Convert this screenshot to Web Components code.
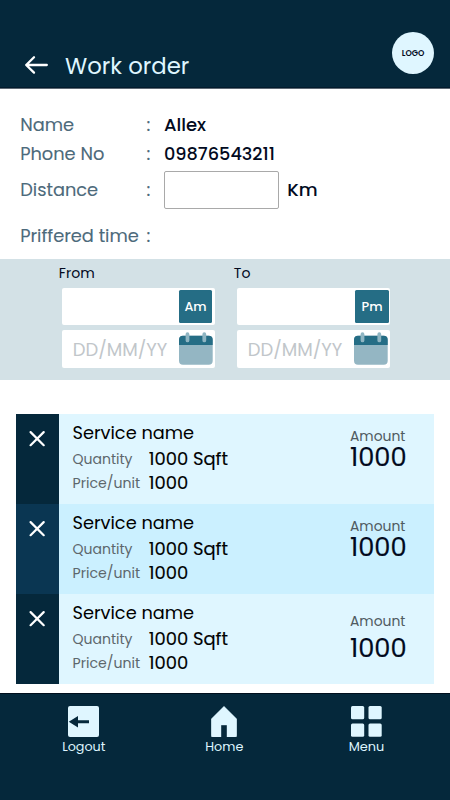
<!DOCTYPE html>
<html lang="en">
<head>
<meta charset="utf-8">
<title>Work order</title>
<style>
html,body{margin:0;background:#fff}
body{font-family:Poppins,Inter,"Liberation Sans",sans-serif;color:#020a1e}
</style>
</head>
<body>
<work-order-page></work-order-page>
<script>
const define = (name, html, setup) => {
  const t = document.createElement('template');
  t.innerHTML = html;
  customElements.define(name, class extends HTMLElement {
    connectedCallback() {
      if (this.shadowRoot) return;
      this.attachShadow({mode: 'open'}).append(document.importNode(t.content, true));
      if (setup) setup(this);
    }
  });
};

/* A single line of text in a 20px line box, with its size in px. */
define('text-line', `<style>
:host{display:block;white-space:nowrap;line-height:20px;height:20px;flex:none}
:host([tall]){line-height:26px;height:26px}
</style><slot></slot>`, el => { el.style.fontSize = el.getAttribute('size') + 'px'; });

define('app-header', `<style>
:host{display:flex;align-items:flex-start;box-sizing:border-box;height:89px;background:#05283b;border-bottom:1px solid #5d6873;box-shadow:inset 0 -1px #021b2d;color:#dff6ff;padding:0 16px 0 24px}
svg{margin-top:55px;flex:none}
text-line{margin:55.6px 0 0 16px}
.logo{margin:32px 0 0 auto;width:42px;height:42px;border-radius:50%;background:#dff6ff;color:#020a1e;display:grid;place-items:center;font-weight:600}
.logo text-line{margin:0}
</style>
<svg width="25" height="20" viewBox="0 0 25 20" fill="none" stroke="#fff" stroke-width="2.3" stroke-linecap="round" stroke-linejoin="round"><path d="M22.8 10H2.3M10 2.2L2.2 10L10 17.6"/></svg>
<text-line size="22.8"><slot></slot></text-line>
<div class="logo"><text-line size="8.1">LOGO</text-line></div>`);

define('detail-row', `<style>
:host{display:flex;flex:none;align-items:center;height:var(--h,28px);padding-left:20.2px;color:#4d6a7b}
.label{width:126.4px;-webkit-text-stroke:.1px}
.colon{width:17.4px;font-size:17.8px;line-height:20px;-webkit-text-stroke:.1px}
.value{display:flex;align-items:center;color:#020a1e;font-weight:500}
</style><div class="label"><slot name="label"></slot></div><div class="colon">:</div><div class="value"><slot></slot></div>`);

define('distance-input', `<style>
:host{display:block;box-sizing:border-box;width:115px;height:38px;border:1px solid #a9a9a9;border-radius:2px;margin-right:8.2px;background:#fff}
</style>`);

define('calendar-icon', `<style>:host{display:block;width:34px;height:33px}svg{display:block}</style>
<svg width="34" height="33" viewBox="0 0 34 33"><rect y="3.7" width="33.7" height="29.1" rx="4" fill="#94b6c3"/><path d="M0 12.9V7.7a4 4 0 0 1 4-4H29.7a4 4 0 0 1 4 4V12.9Z" fill="#256d85"/><path d="M8.5 2.2V8.4M25.3 2.2V8.4" stroke="#8fb5c2" stroke-width="3.8" stroke-linecap="round"/></svg>`);

define('time-group', `<style>
:host{display:block;width:153px}
.head{margin-left:-3.5px;height:14.5px;display:flex;align-items:center}
.field{box-sizing:border-box;height:37.5px;background:#fff;border-radius:2px;display:flex;align-items:flex-start}
.time{margin-top:7.5px;justify-content:flex-end;padding:2.7px var(--end,3px) 0 0}
.date{margin-top:5px;color:#c1c6ca;padding:2px 2.8px 0 10.4px;justify-content:space-between}
.date text-line{margin-top:8px}
.badge{width:33.5px;height:32.5px;background:#256d85;border-radius:1.5px;color:#fff;display:grid;place-items:center;font-weight:500}
</style>
<div class="head"><slot name="head"></slot></div>
<div class="field time"><div class="badge"><slot name="badge"></slot></div></div>
<div class="field date"><text-line size="18">DD/MM/YY</text-line><calendar-icon></calendar-icon></div>`);

define('time-range', `<style>
:host{display:flex;gap:22px;box-sizing:border-box;height:121px;background:#d3e1e6;padding:6.7px 0 0 62.3px}
</style><slot></slot>`);

define('service-card', `<style>
:host{display:flex;height:90px;background:var(--bg,#dff6ff)}
.strip{width:42.5px;background:var(--strip,#05283b);display:flex;justify-content:center;padding-top:16.5px;box-sizing:border-box}
.info{padding:9.4px 0 0 14px;color:#000;flex:1}
.line>text-line{-webkit-text-stroke:.15px}
.line{display:flex;align-items:center;height:23.7px}
.line.first{margin-top:3.9px}
.key{width:76.2px;color:#5d676c}
.amount{width:84px;padding-top:var(--top,11.7px);color:#020a1e}
.amount .cap{color:#505b61}
.amount .sum{margin-top:var(--gap,-2px);-webkit-text-stroke:.2px}
</style>
<div class="strip"><svg width="16" height="16" viewBox="0 0 16 16" stroke="#fff" stroke-width="2.2" stroke-linecap="round"><path d="M1.6 1.1L14.7 14.2M14.7 1.1L1.6 14.2"/></svg></div>
<div class="info"><text-line size="17.75">Service name</text-line>
<div class="line first"><div class="key"><text-line size="14">Quantity</text-line></div><text-line size="17.9">1000 Sqft</text-line></div>
<div class="line"><div class="key"><text-line size="14.1">Price/unit</text-line></div><text-line size="17.9">1000</text-line></div></div>
<div class="amount"><text-line class="cap" size="13.9">Amount</text-line><text-line class="sum" tall size="25.7">1000</text-line></div>`);

define('nav-item', `<style>
:host{display:flex;flex-direction:column;align-items:center;color:#dff6ff;width:142px}
.icon{height:31px}
</style><div class="icon"><slot name="icon"></slot></div><slot></slot>`);

define('bottom-nav', `<style>
:host{display:flex;box-sizing:border-box;height:107px;background:#05283b;border-top:1px solid #010f1d;padding:12px 0 0 12.8px}
</style><slot></slot>`);

define('work-order-page', `<style>
:host{display:flex;flex-direction:column;width:450px;height:800px;background:#fff;overflow:hidden}
.details{box-sizing:border-box;padding-top:22px;height:170px;display:flex;flex-direction:column}
.services{margin:34px 16px 9px 16px}
.services,.details,time-range,bottom-nav,app-header{flex:none}
svg{display:block}
</style>
<app-header>Work order</app-header>
<div class="details">
<detail-row style="--h:28px"><text-line slot="label" size="17.8">Name</text-line><text-line size="18">Allex</text-line></detail-row>
<detail-row style="--h:29.4px"><text-line slot="label" size="17.8">Phone No</text-line><text-line size="17.7">09876543211</text-line></detail-row>
<detail-row style="--h:42.6px"><text-line slot="label" size="17.8">Distance</text-line><distance-input></distance-input><text-line size="18.2">Km</text-line></detail-row>
<detail-row style="--h:50px"><text-line slot="label" size="17.8">Priffered time</text-line></detail-row>
</div>
<time-range>
<time-group><text-line slot="head" size="14.1">From</text-line><text-line slot="badge" size="12.8">Am</text-line></time-group>
<time-group style="--end:1.5px"><text-line slot="head" size="14.1">To</text-line><text-line slot="badge" size="12.9">Pm</text-line></time-group>
</time-range>
<div class="services">
<service-card></service-card>
<service-card style="--bg:#cbf0ff;--strip:#0a3652"></service-card>
<service-card style="--top:16.7px;--gap:4px"></service-card>
</div>
<bottom-nav>
<nav-item><svg slot="icon" width="31" height="31" viewBox="0 0 31 31"><rect width="31" height="31" rx="2" fill="#dff6ff"/><path d="M.8 15.7L10 10V14.2H21V17.2H10V21.5Z" fill="#05283b"/></svg><text-line size="12.75">Logout</text-line></nav-item>
<nav-item style="width:139px"><svg slot="icon" width="26" height="31" viewBox="0 0 26 31"><path d="M13 .3L25.8 13V29.5Q25.8 31 24.3 31H16V19H10V31H1.6Q.2 31 .2 29.5V13Z" fill="#dff6ff" stroke="#dff6ff" stroke-width=".4" stroke-linejoin="round"/></svg><text-line size="12.75">Home</text-line></nav-item>
<nav-item style="width:145.5px"><svg slot="icon" width="31" height="31" viewBox="0 0 31 31" fill="#dff6ff"><rect width="13.2" height="13.2" rx="1.5"/><rect x="17.5" width="13.2" height="13.2" rx="1.5"/><rect y="17.5" width="13.2" height="13.2" rx="1.5"/><rect x="17.5" y="17.5" width="13.2" height="13.2" rx="1.5"/></svg><text-line size="12.9">Menu</text-line></nav-item>
</bottom-nav>`);
</script>
</body>
</html>
